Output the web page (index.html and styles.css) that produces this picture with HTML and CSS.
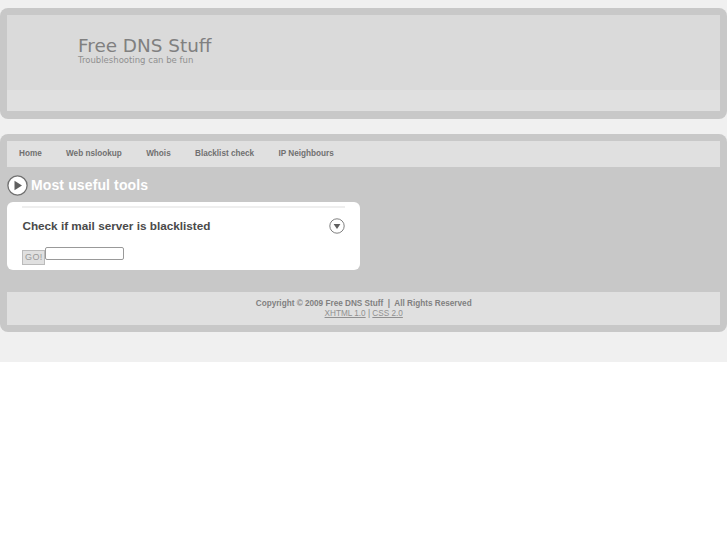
FILE: index.html
```html
<!DOCTYPE html>
<html lang="en">
<head>
<meta charset="utf-8">
<title>Free DNS Stuff</title>
<link rel="stylesheet" href="styles.css">
</head>
<body>
<div class="page">
  <header class="panel head">
    <div class="banner">
      <h1 class="title">Free DNS Stuff</h1>
      <p class="tagline">Troubleshooting can be fun</p>
    </div>
    <div class="strip"></div>
  </header>
  <div class="panel main">
    <nav class="nav">
      <a href="#">Home</a>
      <a href="#">Web nslookup</a>
      <a href="#">Whois</a>
      <a href="#">Blacklist check</a>
      <a href="#">IP Neighbours</a>
    </nav>
    <h2 class="section">
      <svg class="play" width="21" height="21" viewBox="0 0 21 21"><circle cx="10.5" cy="10.5" r="9.6" fill="#fff" stroke="#707070" stroke-width="1.3"/><path d="M7.5 5.8 15 10.5 7.5 15.2Z" fill="#606060"/></svg>
      <span>Most useful tools</span>
    </h2>
    <section class="card">
      <div class="card-title">
        <h3>Check if mail server is blacklisted</h3>
        <svg width="16" height="16" viewBox="0 0 16 16"><circle cx="8" cy="8" r="7.2" fill="#fff" stroke="#808080" stroke-width="1"/><path d="M4.6 6h6.8L8 11Z" fill="#606060"/></svg>
      </div>
      <form class="form">
        <button class="go" type="button">GO!</button>
        <input class="field" type="text">
      </form>
    </section>
    <footer class="foot">
      <p class="copy">Copyright © 2009 Free DNS Stuff &nbsp;|&nbsp; All Rights Reserved</p>
      <p class="links"><a href="#">XHTML 1.0</a> | <a href="#">CSS 2.0</a></p>
    </footer>
  </div>
</div>
</body>
</html>
```
FILE: styles.css
```css
html, body { margin: 0; padding: 0; background: #fff; }
body { font-family: "Liberation Sans", Arial, sans-serif; }
.page { background: #f0f0f0; padding: 8px 0 30px; }
.panel { background: #c8c8c8; border-radius: 8px; padding: 7px 7px 7px 7.4px; }
.head { margin-bottom: 15px; padding-bottom: 8px; }
.banner { background: #dadada; height: 75px; padding-left: 70.6px; box-sizing: border-box; padding-top: 21px; font-family: "DejaVu Sans", sans-serif; color: #808080; }
.title { margin: 0; font-size: 18.4px; font-weight: normal; line-height: 20px; }
.tagline { margin: 0; font-size: 8.5px; line-height: 8px; color: #909090; }
.strip { background: #e0e0e0; height: 21px; }
.nav { background: #e0e0e0; height: 26px; display: flex; align-items: center; gap: 24.3px; padding: 0 0 2px 11.6px; box-sizing: border-box; }
.nav a { font-size: 8.2px; font-weight: bold; color: #707070; text-decoration: none; }
.section { margin: 8px 0 7px; height: 20px; display: flex; align-items: center; gap: 3px; font-size: 14px; font-weight: bold; color: #fff; letter-spacing: 0.12px; }
.play { flex: none; margin-left: -0.4px; }
.card { background: #fff; border-radius: 6px; width: 352.6px; height: 68px; padding: 4px 15px 0; box-sizing: border-box; margin-bottom: 22px; }
.card-title { border-top: 2px solid #eee; display: flex; justify-content: space-between; align-items: center; height: 35px; }
.card-title h3 { margin: 0; font-size: 11.75px; font-weight: bold; color: #4a4a4a; }
.form { display: flex; align-items: flex-start; margin-top: 4px; }
.go { margin: 3px 0 0; width: 23px; height: 15px; padding: 0 0 2px; font: 9px "Liberation Sans", sans-serif; letter-spacing: 0.4px; color: #999; background: #e0e0e0; border: 1px solid #bbb; }
.field { margin: 0; width: 79px; height: 13px; box-sizing: border-box; padding: 0; background: #fff; border: 1px solid #999; border-radius: 2px; }
.foot { background: #e0e0e0; height: 33px; box-sizing: border-box; padding-top: 7px; text-align: center; font-size: 8.2px; line-height: 10px; color: #808080; }
.foot p { margin: 0; }
.copy { font-weight: bold; }
.links a { color: #909090; }
```
